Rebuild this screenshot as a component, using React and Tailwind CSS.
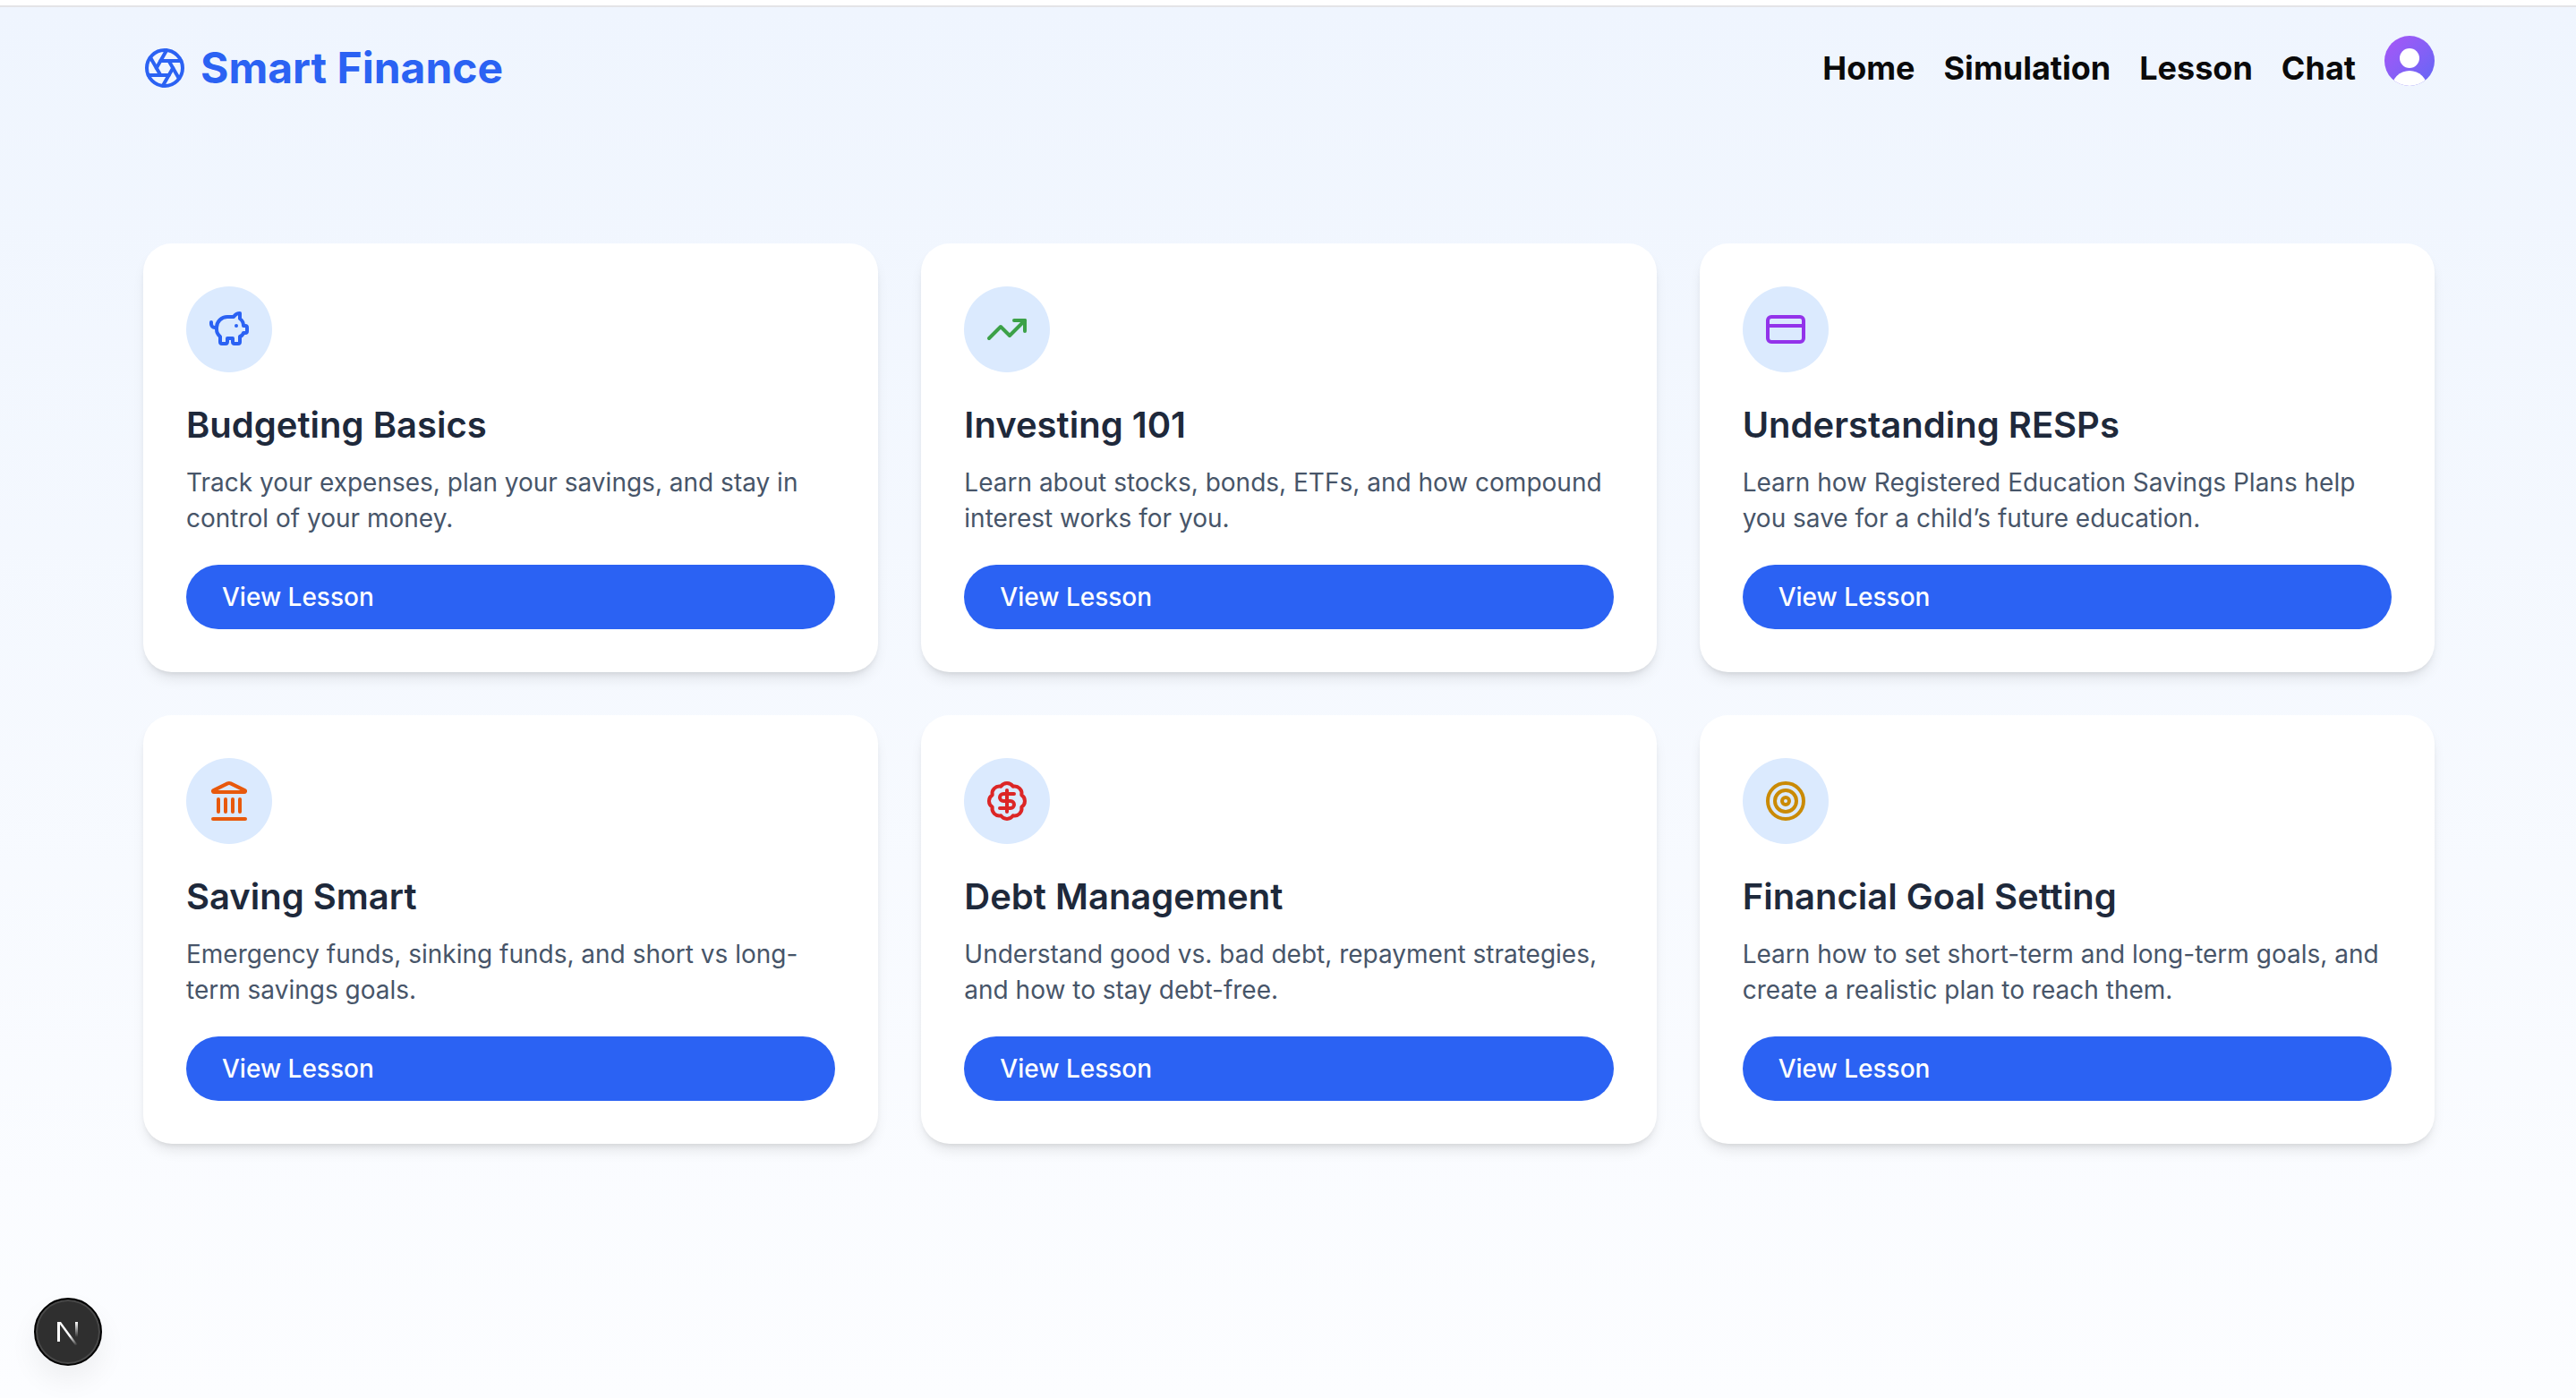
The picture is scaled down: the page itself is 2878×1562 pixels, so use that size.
import React from "react";
import { Aperture, PiggyBank, TrendingUp, CreditCard, Landmark, BadgeDollarSign, Target } from "lucide-react";

const lessons = [
  { icon: PiggyBank, color: "text-[#2b62f3]", title: "Budgeting Basics", text: "Track your expenses, plan your savings, and stay in control of your money." },
  { icon: TrendingUp, color: "text-[#3ca148]", title: "Investing 101", text: "Learn about stocks, bonds, ETFs, and how compound interest works for you." },
  { icon: CreditCard, color: "text-[#9333ea]", title: "Understanding RESPs", text: "Learn how Registered Education Savings Plans help you save for a child’s future education." },
  { icon: Landmark, color: "text-[#e8590c]", title: "Saving Smart", text: "Emergency funds, sinking funds, and short vs long-term savings goals." },
  { icon: BadgeDollarSign, color: "text-[#dc2626]", title: "Debt Management", text: "Understand good vs. bad debt, repayment strategies, and how to stay debt-free." },
  { icon: Target, color: "text-[#ca8a04]", title: "Financial Goal Setting", text: "Learn how to set short-term and long-term goals, and create a realistic plan to reach them." },
];

function Card({ icon: Icon, color, title, text }) {
  return (
    <div className="bg-white rounded-[32px] p-12 shadow-[0_10px_16px_-4px_rgba(0,0,0,0.1),0_4px_6px_-3px_rgba(0,0,0,0.1)]">
      <div className="w-24 h-24 rounded-full bg-[#dbeafe] flex items-center justify-center mb-[31px]">
        <Icon size={48} strokeWidth={2} className={color} />
      </div>
      <h2 className="text-[40px] leading-[56px] font-semibold text-[#1e293b] mb-4">{title}</h2>
      <p className="text-[28px] leading-[40px] text-[#475569] mb-8">{text}</p>
      <button className="w-full h-[72px] rounded-full bg-[#2b62f3] text-white text-[28px] font-medium text-left px-10">View Lesson</button>
    </div>
  );
}

export default function App() {
  return (
    <div className="min-h-[1562px] font-['Inter',sans-serif] relative bg-white pt-[6px]">
      <div className="border-t-2 border-[#e4e4e7] min-h-[1556px] bg-gradient-to-b from-[#eff5fe] to-[#fcfdff] pl-40 pr-[158px]">
        <header className="flex items-start justify-between pt-8 mb-[168px]">
          <div className="flex items-center gap-[16px] pt-[8px] -mb-[1px]">
            <Aperture size={48} strokeWidth={2} className="text-[#2b62f3]" />
            <span className="text-[48px] leading-[56px] font-bold text-[#2b62f3]">Smart Finance</span>
          </div>
          <nav className="flex items-start gap-8 text-[36px] leading-[56px] font-bold text-[#0a0a0a]">
            <span className="pt-[8px]">Home</span>
            <span className="pt-[8px]">Simulation</span>
            <span className="pt-[8px]">Lesson</span>
            <span className="pt-[8px]">Chat</span>
            <div className="w-14 h-14 rounded-full overflow-hidden bg-gradient-to-br from-[#a855f7] to-[#5f66f5] relative">
              <div className="absolute left-[17px] top-[14px] w-[22px] h-[22px] rounded-full bg-white" />
              <div className="absolute left-[8px] top-[39px] w-[40px] h-[40px] rounded-full bg-white" />
            </div>
          </nav>
        </header>
        <main className="grid grid-cols-3 gap-12">
          {lessons.map((l) => <Card key={l.title} {...l} />)}
        </main>
      </div>
      <div className="fixed left-[38px] top-[1450px] w-[76px] h-[76px] rounded-full bg-[#2f2f2f] border-2 border-black shadow-[inset_0_0_0_2px_rgba(255,255,255,0.12),0_16px_32px_rgba(0,0,0,0.06)] flex items-center justify-center">
        <svg width="32" height="32" viewBox="0 0 32 32" fill="none">
          <defs>
            <linearGradient id="nd" gradientUnits="userSpaceOnUse" x1="6" y1="5" x2="26" y2="31"><stop offset="0.6" stopColor="#fff" /><stop offset="1" stopColor="#fff" stopOpacity="0" /></linearGradient>
            <linearGradient id="nr" x1="0" y1="0" x2="0" y2="1"><stop offset="0" stopColor="#fff" /><stop offset="1" stopColor="#fff" stopOpacity="0" /></linearGradient>
          </defs>
          <rect x="4" y="5" width="3" height="22" fill="#fff" />
          <path d="M5 5 H8 L27 31 H24 Z" fill="url(#nd)" />
          <rect x="24" y="5" width="3" height="17" fill="url(#nr)" />
        </svg>
      </div>
    </div>
  );
}
